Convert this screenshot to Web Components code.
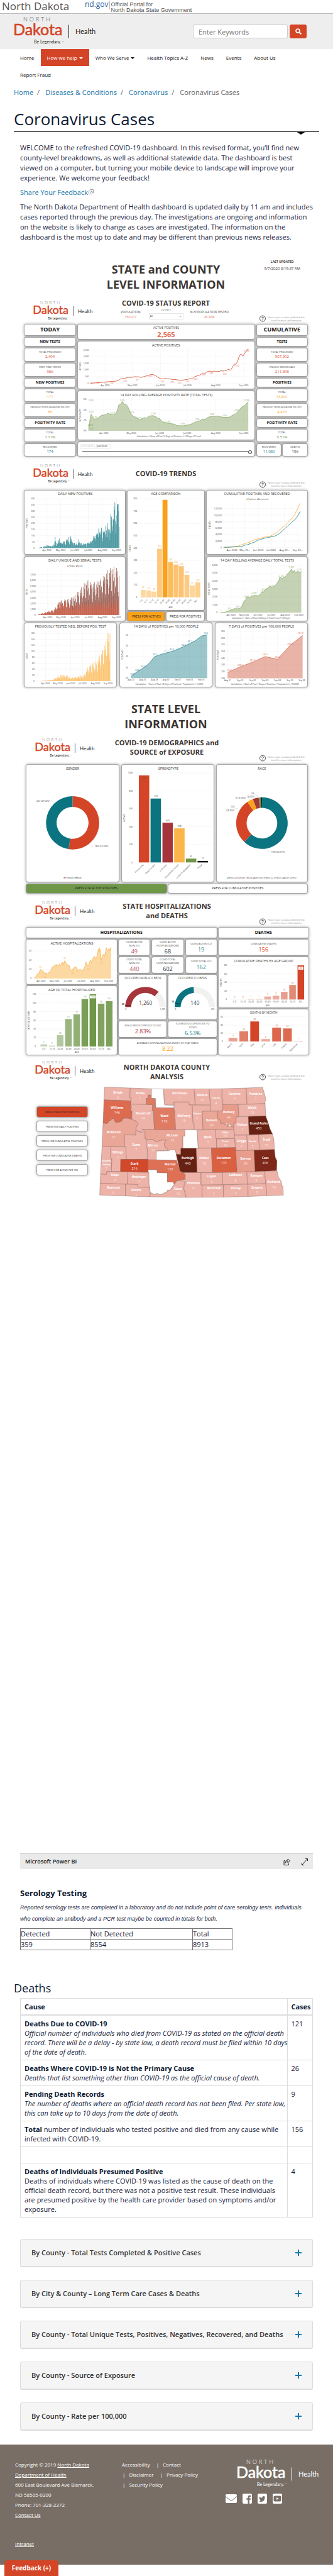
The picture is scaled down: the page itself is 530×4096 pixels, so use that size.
<!DOCTYPE html>
<html lang="en">
<head>
<meta charset="utf-8">
<title>Coronavirus Cases | Department of Health</title>
<meta name="viewport" content="width=device-width, initial-scale=1">
<style>
  body { margin: 0; background: #fff; color: #15203a; font: 11px/16px "Open Sans", "Noto Sans", sans-serif; }
</style>
</head>
<body>
<covid-page></covid-page>

<script>
const define = (name, css, html) => {
  const tpl = document.createElement('template');
  customElements.define(name, class extends HTMLElement {
    constructor() {
      super();
      this.attachShadow({ mode: 'open' });
    }
    connectedCallback() {
      if (this.shadowRoot.childNodes.length) return;
      tpl.innerHTML = `<style>*{box-sizing:border-box}:host{display:block;box-sizing:border-box}${css}</style>` +
        (typeof html === 'function' ? html(this) : html);
      this.shadowRoot.append(tpl.content.cloneNode(true));
    }
  });
};

/* ---------- brand ---------- */
define('nd-logo', `
  :host{color:#222;--brand:#d44527;--thin:#555}
  :host([tone=light]){color:#fff;--brand:#fff;--thin:#fff}
  svg{display:block;width:100%;height:auto;font-family:Lato,"Open Sans",sans-serif;overflow:visible}`,
  `<svg viewBox="0 0 131 44" role="img" aria-label="North Dakota Health, Be Legendary">
    <text x="15" y="7" font-size="9" font-weight="300" letter-spacing="3" fill="var(--thin)">NORTH</text>
    <text x="-1" y="29" font-size="25" fill="var(--brand)" stroke="var(--brand)" stroke-width=".6">Dakota</text>
    <path d="M87.500 12.500V33.500" stroke="currentColor"/>
    <text x="98" y="27" font-size="11" fill="currentColor">Health</text>
    <text x="32" y="42" font-size="7" fill="currentColor">Be Legendary.</text>
    <text x="77" y="40" font-size="3" fill="currentColor">™</text>
  </svg>`);

define('state-banner', `
  :host{display:flex;align-items:flex-start;height:22px;border-bottom:1px solid #bbb;padding-left:3px;color:#555}
  b{font:17px/20px "Open Sans",sans-serif;width:132px}
  i{font:normal 12px/12px "Open Sans",sans-serif;color:#2a62a5;border-right:1px solid #bbb;height:14px;padding-right:1px;margin-top:1px}
  span{font:9px/9px "Liberation Sans",Arial,sans-serif;padding:3px 0 0 2px}`,
  `<b>North Dakota</b><i>nd.gov</i><span>Official Portal for<br>North Dakota State Government</span>`);

define('site-header', `
  :host{display:flex;justify-content:space-between;align-items:center;background:#eee;height:56px;padding:0 42px 0 22px}
  nd-logo{width:131px;margin-bottom:2px}
  form{display:flex;gap:3px;margin:0}
  input{width:151px;height:22px;border:1px solid #ccc;border-radius:3px;padding:0 8px;font:11px "Open Sans",sans-serif;background:#fff}
  input::placeholder{color:#757575}
  button{width:27px;height:22px;border:0;border-radius:3px;background:#d44527;padding:0;display:grid;place-items:center}`,
  `<nd-logo></nd-logo>
  <form><input type="search" placeholder="Enter Keywords" aria-label="Enter Keywords">
  <button type="button" aria-label="Search"><svg width="10" height="10" viewBox="0 0 10 10" fill="none" stroke="#fff" stroke-width="1.700"><circle cx="4" cy="4" r="3"/><path d="M6.200 6.200L9.300 9.300" stroke-width="2"/></svg></button></form>`);

define('main-nav', `
  nav{display:flex;flex-wrap:wrap;padding:0 60px 0 22px}
  a{font-size:8px;line-height:27px;padding:0 10px;color:#111;text-decoration:none}
  a.on{background:#d44527;color:#fff}
  a.menu::after{content:"";display:inline-block;border:3px solid transparent;border-top-color:currentColor;border-bottom:0;margin-left:3px;vertical-align:1px}`,
  `<nav><a href="#">Home</a><a href="#" class="on menu">How we help</a><a href="#" class="menu">Who We Serve</a><a href="#">Health Topics A-Z</a><a href="#">News</a><a href="#">Events</a><a href="#">About Us</a><a href="#">Report Fraud</a></nav>`);

define('bread-crumbs', `
  :host{padding:7px 22px 0}
  ol{list-style:none;display:flex;margin:0;padding:0;color:#666}
  li+li::before{content:"/";padding:0 9px 0 6px}
  a{color:#1a76aa;text-decoration:none}`,
  `<ol><li><a href="#">Home</a></li><li><a href="#">Diseases &amp; Conditions</a></li><li><a href="#">Coronavirus</a></li><li>Coronavirus Cases</li></ol>`);

define('page-title', `
  :host{margin:15px 22px 0;padding-bottom:1px;border-bottom:1px solid #000;position:relative}
  h1{font-size:26px;line-height:38px;font-weight:400;margin:0;color:#0d1a33}
  :host::after{content:"";position:absolute;right:21px;top:100%;border:8px solid transparent;border-top:5px solid #000;border-bottom:0}`,
  `<h1><slot></slot></h1>`);

define('intro-text', `
  :host{padding:17px 14px 0 32px}
  p{margin:0 0 7px}
  a{color:#1a76aa;text-decoration:none}`,
  `<p>WELCOME to the refreshed COVID-19 dashboard. In this revised format, you’ll find new<br>county-level breakdowns, as well as additional statewide data. The dashboard is best<br>viewed on a computer, but turning your mobile device to landscape will improve your<br>experience. We welcome your feedback!</p>
  <p><a href="#">Share Your Feedback<svg width="9" height="9" viewBox="0 0 9 9" fill="none" stroke="#999"><path d="M3.500 2.500h-2v5h5v-2M3.500 1V.500h5v5h-1.500M3 6l3-3M4 3h2.500v2.500"/></svg></a></p>
  <p>The North Dakota Department of Health dashboard is updated daily by 11 am and includes<br>cases reported through the previous day. The investigations are ongoing and information<br>on the website is likely to change as cases are investigated. The information on the<br>dashboard is the most up to date and may be different than previous news releases.</p>`);

/* ---------- report building blocks ---------- */
const CARD = `background:#fff;border-radius:3px;box-shadow:0 0 0 1px #a6a6a6,0 0 4px 1px rgba(0,0,0,.35);`;

define('help-note', `
  :host{display:flex;align-items:center;gap:3px;color:#888;font-size:4px;line-height:5px;text-align:center}
  svg{flex:none;display:block;width:10px;height:13px}`,
  `<svg viewBox="0 0 10 13"><circle cx="5" cy="6.500" r="4.500" fill="#fff" stroke="#222" stroke-width=".8"/><path d="M3.600 5.500q0-1.400 1.400-1.400t1.400 1.300q0 .8-.8 1.200t-.6 1.100M5 8.400v.9" fill="none" stroke="#222" stroke-width=".8"/></svg>
  <span>Hover over a value and click the<br>icon for more information</span>`);

define('report-head', `
  :host{display:grid;grid-template-columns:1fr auto 1fr;min-height:44px;padding-left:14px}
  nd-logo{width:95px;margin-top:4px}
  h3{font-size:11px;line-height:15px;margin:var(--drop,5px) 0 0;color:#3b3532;text-align:center}
  help-note{justify-self:end;align-self:end;margin-right:4px}
  .mid{margin-left:-14px}`,
  `<nd-logo></nd-logo><div class="mid"><h3><slot></slot></h3><slot name="under"></slot></div><help-note></help-note>`);

define('big-title', `
  :host{display:grid;grid-template-columns:1fr auto 1fr;color:#3b3532}
  h2{grid-column:2;margin:0;font-size:18px;line-height:24px;text-align:center}
  ::slotted(*){justify-self:end;align-self:start}`,
  `<h2><slot></slot></h2><slot name="side"></slot>`);

define('stat-card', `
  :host{${CARD}display:flex;flex-direction:column;align-items:center;justify-content:center;text-align:center;color:#444;font-size:4px;line-height:6px;min-width:0}
  b{font-weight:400;font-size:6px;line-height:8px;color:var(--tone,#333)}
  :host([size=m]) b{font-size:9px;line-height:11px}
  :host([size=l]){font-size:5px;line-height:8px}
  :host([size=l]) b{font-size:11px;line-height:13px;font-weight:700}
  :host([tight]) span{font-size:3px}`,
  h => `<span>${h.getAttribute('label')}</span><b style="--tone:${h.getAttribute('tone')}">${h.getAttribute('value')}</b>`);

define('head-card', `
  :host{${CARD}display:grid;place-items:center;font-size:6px;line-height:8px;font-weight:700;color:#111}
  :host([size=m]){font-size:7px;min-height:16px}
  :host([size=l]){font-size:9px;line-height:12px}`, `<slot></slot>`);

define('press-button', `
  button{${CARD}display:block;width:100%;height:100%;min-height:14px;border:0;padding:0;font:5px/7px "Open Sans",sans-serif;color:#222}
  :host([tone=orange]) button{background:#f9a11b}
  :host([tone=green]) button{background:#6f9748}
  :host([tone=red]) button{background:#d44527}
  :host([small]) button{font-size:4px;min-height:16px}`,
  `<button type="button"><slot></slot></button>`);

/* ---------- chart drawing ---------- */
/* A sheet maps data-sheet coordinates (origin ox,oy; sx,sy sheet units to one drawing unit). */
const sheet = (ox, oy, w, h, sy, parts) => {
  const sx = 2, X = x => +((x - ox) / sx).toFixed(1), Y = y => +((y - oy) / sy).toFixed(1);
  const pts = s => s.split(' ').map(p => { const [x, y] = p.split(','); return X(x) + ',' + Y(y); }).join(' ');
  const d = {
    X, Y,
    t: (x, y, s, o = {}) => `<text x="${X(x)}" y="${Y(y)}" dy=".35em" font-size="${o.z || 5}" text-anchor="${o.a || 'middle'}" fill="${o.f || '#444'}"${o.w ? ` font-weight="${o.w}"` : ''}${o.r ? ` transform="rotate(${o.r} ${X(x)} ${Y(y)})"` : ''}>${s}</text>`,
    title: (x, y, s) => d.t(x, y, s, { z: 8, f: '#333' }),
    hs: (ys, a, b) => ys.map(y => `<path d="M${X(a)} ${Y(y)}H${X(b)}" class="g"/>`).join(''),
    vs: (xs, a, b) => xs.map(x => `<path d="M${X(x)} ${Y(a)}V${Y(b)}" class="g"/>`).join(''),
    yl: (x, rows, z) => rows.map(([y, s]) => d.t(x, y, s, { a: 'end', z })).join(''),
    xl: (y, cols, o) => cols.map(([x, s]) => d.t(x, y, s, o)).join(''),
    line: (s, c) => `<polyline points="${pts(s)}" fill="none" stroke="${c}" stroke-width="1.200"/>`,
    area: (s, base, fill, c) => { const a = s.split(' '); return `<polygon points="${pts(a[0].split(',')[0] + ',' + base + ' ' + s + ' ' + a[a.length - 1].split(',')[0] + ',' + base)}" fill="${fill}"/>` + (c ? d.line(s, c) : ''); },
    bar: (x, top, w, base, f) => `<rect x="${X(x - w / 2)}" y="${Y(top)}" width="${w / sx}" height="${Math.max(0, Y(base) - Y(top)).toFixed(1)}" fill="${f}"/>`,
    poly: (s, f) => `<polygon points="${pts(s)}" fill="${f}" stroke="#7b5a53" stroke-width=".6"/>`,
    lab: (rows, f) => rows.map(([x, y, s]) => d.t(x, y, s, { f })).join('')
  };
  return `<svg viewBox="0 0 ${w / sx} ${(h / sy).toFixed(1)}" role="img">${parts(d)}</svg>`;
};
const months = ['Apr 2020', 'May 2020', 'Jun 2020', 'Jul 2020', 'Aug 2020', 'Sep 2020'];
const zip = (a, b) => a.map((x, i) => [x, b[i]]);
const steps = (y0, dy, labels) => labels.map((s, i) => [y0 - dy * i, s]);
const ring = (cx, cy, R, r, parts) => {
  let a = 0;
  const p = (q, t) => `${(cx + q * Math.sin(t)).toFixed(1)} ${(cy - q * Math.cos(t)).toFixed(1)}`;
  return parts.map(([v, c]) => {
    const b = a + v * 2 * Math.PI / 100, big = v > 50 ? 1 : 0;
    const s = `<path d="M${p(R, a)}A${R} ${R} 0 ${big} 1 ${p(R, b)}L${p(r, b)}A${r} ${r} 0 ${big} 0 ${p(r, a)}Z" fill="${c}"/>`;
    a = b; return s;
  }).join('');
};
const gauge = (cx, cy, share, mark, color) => {
  const arc = (f, c) => { const t = Math.PI * (1 - f), p = q => `${(cx + q * Math.cos(t)).toFixed(1)} ${(cy - q * Math.sin(t)).toFixed(1)}`; return `<path d="M${cx - 47} ${cy}A47 47 0 0 1 ${p(47)}L${p(33)}A33 33 0 0 0 ${cx - 33} ${cy}Z" fill="${c}"/>`; };
  const t = Math.PI * (1 - mark);
  return arc(1, '#f2f1f0') + arc(share, color) + `<path d="M${(cx + 33 * Math.cos(t)).toFixed(1)} ${(cy - 33 * Math.sin(t)).toFixed(1)}L${(cx + 47 * Math.cos(t)).toFixed(1)} ${(cy - 47 * Math.sin(t)).toFixed(1)}" stroke="#111" stroke-width=".8"/>`;
};
const daily = [1,0,0,0,0,3,0,4,8,6,8,0,2,3,7,13,9,16,12,8,10,20,22,14,12,20,12,18,12,16,8,14,12,18,12,12,28,22,46,90,55,43,20,16,32,42,44,62,75,46,44,40,35,44,38,34,40,54,48,52,38,30,26,60,72,52,67,50,88,46,30,58,78,95,70,54,50,40,42,26,38,42,36,18,26,30,46,26,20,40,72,50,40,20,38,36,40,28,26,20,38,30,32,26,32,36,30,8,42,40,34,38,46,36,40,44,58,52,36,56,60,70,98,92,80,98,55,76,105,120,116,112,88,158,110,126,118,104,140,165,132,84,54,128,146,120,132,110,180,90,142,168,200,88,152,128,60,148,120,272,230,254,176,140,234,232,336,310,372,220,116,194,266,358,345,358,300,170];
const week = [.62, .9, 1, .8, .94, .5, .4, .85, .95, .7, 1, .78, .45, .58];
/* day-by-day values between monthly marks, with the weekly reporting rhythm laid over them */
const paced = (marks, n, k = 0) => Array.from({ length: n }, (_, i) => {
  const p = i / (n - 1) * (marks.length - 1), j = Math.min(marks.length - 2, Math.floor(p));
  return (marks[j] + (marks[j + 1] - marks[j]) * (p - j)) * week[(i + k) % week.length];
});

const charts = {
  active: () => sheet(369, 615, 828, 334, 3, d => d.title(783, 640, 'ACTIVE POSITIVES') +
    d.hs([675, 722, 769, 816, 862, 909], 427, 1175) + d.vs([497, 625, 757, 884, 1016, 1148], 675, 909) +
    d.yl(420, steps(909, 46.8, ['0', '500', '1,000', '1,500', '2,000', '2,500'])) +
    d.xl(925, zip([497, 625, 757, 884, 1016, 1148], months)) + d.t(380, 789, 'ACTIVES', { r: -90 }) +
    d.line('427,909 445,907 475,904 497,900 530,896 545,895 558,890 565,882 573,876 590,875 602,867 622,868 632,863 655,864 665,868 680,862 690,857 700,857 710,847 722,847 735,857 745,868 757,876 770,879 778,874 790,878 805,879 815,884 825,882 848,889 870,885 884,881 897,876 906,878 918,862 940,852 950,843 958,837 966,840 978,826 990,823 1000,828 1008,823 1016,827 1035,825 1042,818 1050,824 1058,818 1064,823 1070,815 1078,810 1084,818 1090,810 1096,790 1104,773 1110,776 1118,758 1126,722 1134,703 1144,718 1150,702 1157,687 1165,670 1170,670', '#d44527') +
    d.lab([[433, 905, '6'], [463, 905, '88'], [499, 906, '101'], [528, 905, '132'], [591, 891, '376'], [650, 882, '491'], [710, 864, '672'], [766, 897, '323'], [812, 903, '275'], [846, 905, '213'], [884, 899, '303'], [922, 879, '523'], [961, 855, '771'], [995, 840, '923'], [1059, 843, '913'], [1114, 786, '1,516'], [1161, 687, '2,565']], '#df7158')),

  rolling: () => sheet(369, 966, 828, 338, 3, d => d.title(784, 991, '14 DAY ROLLING AVERAGE POSITIVITY RATE (TOTAL TESTS)') +
    d.area('418,1200 422,1217 426,1160 431,1128 438,1150 446,1162 458,1161 467,1150 480,1136 490,1133 500,1132 509,1120 518,1127 535,1132 545,1126 552,1108 557,1085 561,1062 570,1060 577,1038 583,1048 588,1060 594,1058 602,1072 608,1090 614,1112 620,1130 630,1142 645,1152 660,1168 672,1158 682,1152 692,1155 702,1141 722,1138 735,1146 745,1157 753,1158 765,1182 778,1185 795,1193 820,1197 835,1208 862,1210 880,1205 900,1198 925,1180 940,1175 955,1162 965,1165 980,1150 995,1143 1015,1143 1025,1140 1040,1147 1055,1150 1080,1149 1095,1135 1110,1125 1118,1112 1125,1105 1135,1082 1142,1073 1149,1071 1160,1055 1169,1040', 1245, '#c5d3b4', '#8aac69') +
    d.hs([1023, 1098, 1170, 1245], 415, 1175) + d.vs([491, 620, 753, 882, 1016, 1148], 1023, 1245) +
    d.yl(409, [[1023, '6%'], [1098, '4%'], [1170, '2%'], [1245, '0%']]) + d.xl(1260, zip([491, 620, 753, 882, 1016, 1148], months)) +
    d.t(380, 1135, '% POSITIVITY', { r: -90 }) + d.t(796, 1284, 'Calculation = (Sum of Past 14 Days of Positives / 14 Days of Tests)') +
    d.lab([[430, 1032, '5.9%'], [577, 1032, '5.6%'], [431, 1113, '3.2%'], [449, 1150, '2.2%'], [430, 1203, '0.8%'], [430, 1230, '0.0%'], [531, 1119, '3.1%'], [621, 1116, '3.1%'], [658, 1156, '2.1%'], [723, 1125, '2.9%'], [792, 1180, '1.4%'], [861, 1197, '0.9%'], [929, 1164, '1.8%'], [999, 1128, '2.8%'], [1058, 1137, '2.5%'], [1115, 1101, '3.5%'], [1163, 1032, '5.5%']], '#83a761')),

  newpos: () => sheet(117, 210, 474, 416, 2.8, d => d.title(355, 233, 'DAILY NEW POSITIVES') +
    d.hs([264, 303, 345, 384, 426, 467, 507, 548, 588], 172, 562) + d.vs([222, 287, 354, 417, 484, 550], 264, 588) +
    d.yl(165, steps(588, 40.5, ['0', '50', '100', '150', '200', '250', '300', '350', '400'])) +
    d.xl(602, zip([222, 287, 354, 417, 484, 550], months)) + d.t(128, 426, 'POSITIVES', { r: -90 }) +
    daily.map((v, i) => d.bar(176 + i * 386 / (daily.length - 1), 588 - v * .81, 2.2, 588, i % 2 ? '#1f7f8a' : '#3a8e98')).join('')),

  ages: () => sheet(603, 210, 357, 782, 2.8, d => d.title(782, 233, 'AGE COMPARISON') +
    d.hs([264, 345, 426, 507, 588, 668, 749, 830, 910], 655, 950) + d.yl(648, steps(910, 80.8, ['0', '100', '200', '300', '400', '500', '600', '700', '800'])) +
    [[676, 861, 63, '#fcd8a0'], [702, 865, 58, '#fcd8a0'], [727, 872, 49, '#fcd8a0'], [753, 592, 394, '#fcc97e'], [778.500, 272, 789, '#f9a11b'], [804, 678, 288, '#fcbc5c'], [830, 695, 266, '#fcc372'], [855, 706, 254, '#fcc372'], [881, 762, 184, '#fccb85'], [906.500, 833, 97, '#fcd69a'], [932, 812, 123, '#fcd08e']].map(([x, y, v, c]) => d.bar(x, y, 23, 910, c) + d.t(x, y - (v === 789 ? 0 : 15), v, { f: '#f8b04a' })).join('') +
    d.xl(925, zip([672, 697, 723, 748, 774, 799, 825, 850, 876, 901, 929], ['0-5', '6-11', '12-14', '15-19', '20-29', '30-39', '40-49', '50-59', '60-69', '70-79', '80+']), { a: 'end', r: -45 }) +
    d.t(805, 974, 'AGE') + d.t(615, 588, 'CASES', { r: -90 })),

  cumulative: () => sheet(972, 210, 473, 418, 2.8, d => d.title(1208, 233, 'CUMULATIVE POSITIVES AND RECOVERED') +
    d.t(1209, 269, '<tspan fill="#f9a11b">●</tspan>Positives <tspan fill="#0b7480">●</tspan>Recovered') +
    d.hs([329, 371, 414, 456, 498, 541, 584], 1050, 1416) + d.vs([1091, 1151, 1214, 1275, 1337, 1400], 292, 584) +
    d.yl(1043, steps(584, 42.4, ['0', '2,000', '4,000', '6,000', '8,000', '10,000', '12,000']), 6) +
    d.xl(601, zip([1091, 1151, 1214, 1275, 1337, 1399], ['Apr 2020', 'May 20...', 'Jun 2020', 'Jul 2020', 'Aug 20...', 'Sep 20...']), { z: 6 }) + d.t(986, 437, 'CASES', { r: -90, z: 6 }) +
    d.line('1050,583 1080,582 1105,578 1120,575 1130,569 1151,558 1175,549 1185,541 1200,531 1220,525 1240,517 1270,509 1285,500 1300,487 1312,471 1325,455 1340,439 1352,422 1364,402 1372,394 1380,376 1387,364 1393,342 1401,327 1406,304 1411,292', '#fbaa38') +
    d.line('1055,583 1120,579 1140,575 1150,569 1165,565 1180,556 1195,550 1210,537 1225,531 1240,524 1265,517 1290,510 1305,500 1320,484 1335,465 1350,445 1365,427 1380,408 1392,392 1402,369 1411,348', '#1d7f8a')),

  tests: () => sheet(117, 647, 474, 418, 2.8, d => {
    const total = paced([60, 350, 700, 900, 2500, 2700, 2900, 3600, 4700, 6100, 5600, 5900, 6500, 8000, 8400, 8000], 176);
    const uniq = paced([50, 330, 650, 850, 2300, 2200, 1700, 1900, 2000, 2200, 2000, 2300, 2100, 2300, 2500, 2400], 176);
    return d.title(354, 670, 'DAILY UNIQUE AND SERIAL TESTS') + d.t(353, 706, '<tspan fill="#dc6b50">●</tspan>Unique <tspan fill="#7d2818">●</tspan>Serial') +
      d.hs([762, 800, 838, 876, 914, 952, 989, 1027], 175, 562) + d.vs([226, 289, 355, 419, 484, 550], 728, 1027) +
      d.yl(169, steps(1027, 37.9, ['0', '1,000', '2,000', '3,000', '4,000', '5,000', '6,000', '7,000'])) +
      d.xl(1042, zip([226, 289, 355, 419, 484, 550], months)) + d.t(128, 877, 'TESTS', { r: -90 }) +
      total.map((v, i) => { const x = 180 + i * 2.18; return d.bar(x, 1027 - v * .0379, 2, 1027, i % 2 ? '#7d3426' : '#97574a') + d.bar(x, 1027 - uniq[i] * .0379, 2, 1027, i % 2 ? '#dd6046' : '#e07a64'); }).join('');
  }),

  totals: () => sheet(972, 647, 473, 418, 2.8, d => d.title(1209, 670, '14 DAY ROLLING AVERAGE DAILY TOTAL TESTS') +
    d.area('1037,1009 1058,1008 1075,1000 1090,990 1105,984 1118,986 1130,980 1138,965 1145,940 1155,925 1160,908 1175,910 1185,900 1200,898 1214,900 1225,888 1232,873 1242,875 1250,855 1260,848 1270,838 1280,846 1290,838 1298,825 1306,810 1312,795 1316,775 1325,788 1335,778 1342,775 1350,758 1358,748 1364,735 1370,725 1376,748 1383,732 1390,752 1398,738 1406,745 1416,742', 1010, '#c5d3b4', '#8aac69') +
    d.hs([700, 752, 804, 855, 907, 958, 1010], 1030, 1422) + d.vs([1086, 1148, 1212, 1275, 1340, 1405], 700, 1010) +
    d.yl(1023, steps(1010, 51.7, ['0', '1,000', '2,000', '3,000', '4,000', '5,000', '6,000'])) + d.xl(1025, zip([1086, 1148, 1212, 1275, 1340, 1405], months)) +
    d.t(983, 855, 'TOTAL TESTS', { r: -90 }) + d.t(1226, 1047, 'Calculation = (Sum of Past 14 Days of Total Tests / 14 Days)') +
    d.lab([[1038, 996, '1'], [1078, 983, '251'], [1117, 971, '495'], [1157, 905, '1,804'], [1194, 882, '2,228'], [1236, 860, '2,656'], [1276, 835, '3,154'], [1323, 775, '4,292'], [1370, 712, '5,507'], [1407, 730, '5,142']], '#83a761')),

  previously: () => sheet(117, 1081, 431, 418, 2.8, d => d.title(333, 1104, 'PREVIOUSLY TESTED NEG. BEFORE POS. TEST') +
    d.hs([1148, 1187, 1226, 1266, 1305, 1344, 1383, 1422, 1461], 170, 520) + d.vs([216, 274, 334, 390, 450, 510], 1135, 1461) +
    d.yl(164, steps(1461, 39.1, ['0', '20', '40', '60', '80', '100', '120', '140', '160'])) + d.xl(1475, zip([216, 274, 334, 390, 450, 510], months)) + d.t(128, 1296, 'CASES', { r: -90 }) +
    paced([0, 0, 2, 3, 6, 16, 22, 20, 12, 14, 18, 22, 50, 62, 70, 98, 135, 185], 176).map((v, i) => d.bar(172 + i * 1.98, 1461 - v * 1.95, 1.8, 1461, i % 2 ? '#f9ad3a' : '#fcc066')).join('')),

  per10k: () => sheet(565, 1081, 433, 418, 2.8, d => d.title(783, 1104, '14 DAYS of POSITIVES per 10,000 PEOPLE') +
    d.area('617,1432 645,1402 673,1378 701,1348 728,1302 757,1287 783,1277 810,1267 838,1252 866,1235 893,1215 921,1196 950,1165 977,1157', 1443, '#9bc6cb', '#2f8690') +
    d.hs([1159, 1230, 1302, 1373, 1443], 612, 985) + d.vs([617, 672, 728, 782, 838, 893, 948], 1135, 1443) +
    d.yl(603, [[1159, '50'], [1230, '45'], [1302, '40'], [1373, '35'], [1443, '30']]) + d.xl(1456, zip([617, 672, 728, 782, 838, 893, 948], ['Aug 24', 'Aug 26', 'Aug 28', 'Aug 30', 'Sep 01', 'Sep 03', 'Sep 05'])) +
    d.t(576, 1287, 'POSITIVES', { r: -90 }) + d.t(797, 1481, 'Calculation = (Sum of Past 14 Days of Positives / Population) x 10,000') +
    d.lab([[623, 1417, '30.9'], [646, 1391, '32.8'], [673, 1366, '34.5'], [728, 1288, '39.9'], [784, 1263, '41.7'], [810, 1252, '42.5'], [866, 1224, '44.6'], [893, 1201, '46.1'], [971, 1145, '50.2']], '#2f8690')),

  per100k: () => sheet(1016, 1081, 431, 418, 2.8, d => d.title(1232, 1104, '7 DAYS of POSITIVES per 100,000 PEOPLE') +
    d.area('1073,1405 1132,1367 1190,1337 1249,1300 1307,1318 1366,1227 1425,1161', 1443, '#eab3a7', '#dc6b50') +
    d.hs([1134, 1178, 1222, 1266, 1310, 1355, 1398, 1443], 1068, 1428) + d.vs([1073, 1132, 1190, 1249, 1307, 1366, 1425], 1134, 1443) +
    d.yl(1060, steps(1443, 44.1, ['230', '235', '240', '245', '250', '255', '260', '265'])) + d.xl(1456, zip([1073, 1132, 1190, 1249, 1307, 1366, 1422], ['Aug 31', 'Sep 01', 'Sep 02', 'Sep 03', 'Sep 04', 'Sep 05', 'Sep 06'])) +
    d.t(1027, 1288, 'POSITIVES', { r: -90 }) + d.t(1248, 1481, 'Calculation = (Sum of Past 7 Days of Positives / Population) x 100,000') +
    d.lab([[1083, 1391, '234.2'], [1132, 1355, '238.5'], [1190, 1324, '241.9'], [1249, 1288, '246.2'], [1308, 1304, '244.2'], [1366, 1216, '254.4'], [1416, 1148, '261.9']], '#dc6b50')),

  gender: () => sheet(126, 515, 433, 820, 3, d => d.title(343, 540, 'GENDER') +
    ring(d.X(343), d.Y(924), 62.500, 37.500, [[52.36, '#d44527'], [47.64, '#0b7480']]) +
    `<path d="M${d.X(239)} ${d.Y(769)}h3.500l4.500 5M${d.X(439)} ${d.Y(1091)}h-4l-4-6" class="k"/>` +
    d.t(202, 771, '1222 (47.64%)') + d.t(478, 1092, '1343 (52.36%)') +
    d.t(343, 1309, '<tspan fill="#d44527">●</tspan>Female <tspan fill="#0b7480">●</tspan>Male', { z: 6 })),

  spread: () => sheet(575, 515, 433, 820, 3, d => d.title(793, 540, 'SPREADTYPE') +
    d.hs([573, 699, 825, 951, 1077], 635, 1000) + d.yl(626, steps(1203, 126, ['0', '200', '400', '600', '800', '1000'])) +
    [[679, 590, 973, '#d44527'], [734, 753, 714, '#0b7480'], [790, 923, 443, '#a6343b'], [845, 963, 378, '#fcb54a'], [900, 1176, 42, '#6f9748'], [955, 1192, 15, '#000']].map(([x, y, v, c]) => d.bar(x, y, 49, 1203, c) + d.t(x, y + (v === 973 ? 18 : -16), v)).join('') +
    d.xl(1217, zip([675, 730, 785, 841, 896, 951], ['Community', 'Close Contact', 'Unknown', 'Household Contact', 'Under Investigation', 'Travel']), { a: 'end', r: -45 }) + d.t(587, 888, 'ACTIVES', { r: -90 })),

  race: () => sheet(1023, 515, 424, 820, 3, d => d.title(1235, 540, 'RACE') +
    ring(d.X(1235), d.Y(926), 60.500, 36, [[62.07, '#0b7480'], [28.46, '#d44527'], [3.78, '#f9a11b'], [3.66, '#a6343b'], [1.33, '#6f9748'], [.7, '#000']]) +
    `<path d="M${d.X(1201)} ${d.Y(726)}h4l2 5M${d.X(1167)} ${d.Y(745)}h2l4 6M${d.X(1110)} ${d.Y(823)}h5l4 4M${d.X(1272)} ${d.Y(1127)}h-4l-1-6" class="k"/>` +
    d.t(1192, 717, '94') + d.t(1183, 738, '(3.66%)') + d.t(1135, 747, '97 (3.78%)') + d.t(1098, 813, '730') + d.t(1086, 837, '(28.46%)') + d.t(1310, 1128, '1592 (62.07%)') +
    d.t(1234, 1311, [['#0b7480', 'White'], ['#d44527', 'Unknown'], ['#f9a11b', 'Black'], ['#a6343b', 'American Indian'], ['#6f9748', '2 or More'], ['#000', 'Asian'], ['#777', 'Other']].map(([c, s]) => `<tspan fill="${c}">●</tspan>${s}`).join(' '))),

  hosp: () => sheet(126, 333, 427, 316, 3, d => d.title(341, 358, 'ACTIVE HOSPITALIZATIONS') +
    d.hs([413, 478, 543], 160, 545) + d.yl(150, steps(608, 65, ['0', '20', '40', '60'])) +
    d.area('163,598 170,596 178,575 185,572 192,543 198,553 205,555 210,572 220,568 225,575 235,560 242,548 248,528 258,515 268,508 275,521 282,505 288,516 295,492 300,510 306,483 313,497 320,512 327,513 332,545 340,552 348,535 356,523 364,535 368,553 375,546 382,545 390,555 397,535 402,525 406,490 412,508 417,520 422,502 427,479 434,488 441,462 447,450 453,467 460,448 464,408 469,393 474,410 478,478 484,448 489,437 494,450 499,420 502,390 508,408 514,400 520,413 525,388', 608, '#fcd8a2', '#fbb24a') +
    d.xl(624, zip([195, 258, 322, 385, 449, 514], months)) +
    d.lab([[192, 528, '20'], [212, 597, '10'], [306, 465, '39'], [343, 570, '18'], [418, 540, '27'], [479, 498, '40'], [469, 414, '66'], [520, 398, '68']], '#fbb24a')),

  hospage: () => sheet(126, 663, 427, 485, 3, d => d.title(340, 688, 'AGE OF TOTAL HOSPITALIZED') +
    d.hs([720, 781, 843, 904, 966, 1027], 180, 545) + d.yl(171, steps(1089, 61.5, ['0', '20', '40', '60', '80', '100', '120'])) +
    [[208, 1074, 5, '#c3d2b2'], [247, 1083, 2, '#c3d2b2'], [285, 1009, 26, '#b5c7a0'], [324, 895, 63, '#9ab580'], [363, 862, 74, '#92af75'], [401, 754, 109, '#7a9e56'], [439, 720, 120, '#6f9748'], [478, 787, 98, '#81a35f'], [516, 769, 104, '#7da05a']].map(([x, y, v, c]) => d.bar(x, y, 31, 1089, c) + (v === 120 ? d.bar(x, y + 9, 27, y + 29, '#fff') + d.t(x, y + 21, v, { f: '#83a761' }) : d.t(x, y - 16, v, { f: '#83a761' }))).join('') +
    d.xl(1104, zip([208, 247, 285, 324, 363, 401, 439, 478, 516], ['0-9', '10-19', '20-29', '30-39', '40-49', '50-59', '60-69', '70-79', '80+'])) + d.t(364, 1127, 'AGE') + d.t(138, 904, 'HOSPITALIZATIONS', { r: -90 })),

  bedsA: () => sheet(563, 585, 223, 310, 3, d => d.t(676, 608, 'OCCUPIED NON-ICU BEDS', { z: 7 }) + gauge(d.X(687), d.Y(810), .727, .028, '#a6343b') + d.t(688, 785, '1,260', { z: 12 }) + d.t(583, 791, '49', { w: 700 }) + d.t(596, 825, '0') + d.t(767, 825, '1,733')),
  bedsB: () => sheet(797, 585, 223, 310, 3, d => d.t(909, 608, 'OCCUPIED ICU BEDS', { z: 7 }) + gauge(d.X(920), d.Y(810), .481, .065, '#0b7480') + d.t(921, 785, '140', { z: 12 }) + d.t(817, 773, '19', { w: 700 }) + d.t(830, 825, '0') + d.t(1004, 825, '291')),

  deathage: () => sheet(1030, 456, 423, 358, 3, d => d.title(1241, 481, 'CUMULATIVE DEATHS BY AGE GROUP') +
    d.hs([514, 574, 634, 694, 754], 1078, 1445) + d.yl(1068, steps(754, 60, ['0', '20', '40', '60', '80'])) +
    [[1105, 754, 0, '#edb1a6'], [1144, 754, 0, '#edb1a6'], [1182, 751, 1, '#edb1a6'], [1221, 751, 1, '#edb1a6'], [1260, 733, 7, '#ebaca0'], [1299, 727, 9, '#ebaca0'], [1338, 700, 18, '#e79e8e'], [1377, 652, 34, '#e18a76'], [1416, 513, 86, '#d44527']].map(([x, y, v, c]) => d.bar(x, y, 31, 754, c) + (v === 86 ? d.bar(x, y + 9, 24, y + 31, '#fff') + d.t(x, y + 21, v, { f: '#dc5a3e' }) : d.t(x, y - 16, v, { f: '#dc5a3e' }))).join('') +
    d.xl(771, zip([1105, 1144, 1182, 1221, 1260, 1299, 1338, 1377, 1416], ['0-9', '10-19', '20-29', '30-39', '40-49', '50-59', '60-69', '70-79', '80+'])) + d.t(1260, 795, 'AGE') + d.t(1041, 634, 'DEATHS', { r: -90 })),

  deathmonth: () => sheet(1030, 830, 423, 318, 3, d => d.t(1242, 854, 'DEATHS BY MONTH', { z: 7 }) +
    d.hs([882, 941, 999, 1056], 1060, 1445) + d.yl(1050, steps(1056, 58, ['0', '20', '40', '60'])) +
    [[1097, 1030, 9, '#e9a193'], [1148, 984, 25, '#e07e68'], [1199, 915, 49, '#d44527'], [1251, 1039, 6, '#eaa99c'], [1302, 958, 34, '#dc674e'], [1353, 964, 32, '#dc6b50'], [1405, 1053, 1, '#edb1a6']].map(([x, y, v, c]) => d.bar(x, y, 41, 1056, c) + d.t(x, y - 15, v, { f: '#dc5a3e' })).join('') +
    d.xl(1070, zip([1092, 1143, 1194, 1246, 1297, 1348, 1400], ['March', 'April', 'May', 'June', 'July', 'August', 'September']), { a: 'end', r: -45 }))
};
define('chart-card', `
  :host{${CARD}min-width:0}
  svg{display:block;width:100%;height:auto}
  .g{stroke:#999;stroke-opacity:.45;stroke-width:.5;stroke-dasharray:1 1;fill:none}
  .k{stroke:#bbb;stroke-width:.6;fill:none}`,
  h => charts[h.getAttribute('kind')]());

const counties = [
  ['Divide', 2, 556, 272, '493,234 614,241 612,311 618,313 617,332 490,325'],
  ['Burke', 1, 661, 278, '614,241 714,246 713,291 699,291 699,314 690,314 689,357 617,354 618,313 612,311'],
  ['', 'w', 0, 0, '714,246 771,247 772,310 776,360 818,362 819,382 733,380 732,314 713,314'],
  ['Bottineau', 7, 847, 278, '771,247 915,247 919,361 891,360 890,340 820,340 819,362 776,360'],
  ['Rolette', 20, 953, 290, '915,247 986,247 991,362 921,361'],
  ['Pierce', 6, 929, 420, '905,361 991,362 992,404 953,405 957,535 914,535 914,493 909,490'],
  ['Towner', 4, 1018, 310, '987,247 1046,246 1046,318 1050,320 1050,402 992,404 991,318 987,318'],
  ['Cavalier', 4, 1105, 281, '1046,246 1160,241 1164,354 1050,358 1050,320 1046,318'],
  ['Pembina', 7, 1205, 281, '1160,241 1237,236 1242,262 1253,320 1249,335 1249,352 1164,354'],
  ['Williams', 146, 552, 380, '490,325 617,332 616,354 618,400 622,402 621,462 600,454 580,456 573,477 547,486 540,476 538,455 525,462 522,470 512,474 510,486 500,494 486,486'],
  ['Mountrail', 14, 674, 419, '617,354 719,358 717,400 724,403 724,488 727,490 727,532 670,533 670,554 651,549 641,536 641,520 651,493 640,473 621,462 622,400'],
  ['Ward', 119, 775, 440, '699,291 713,291 713,314 732,316 733,380 819,382 823,405 824,420 828,534 727,534 724,403 718,400 719,358 689,357 690,314 699,314'],
  ['McHenry', 15, 867, 437, '820,340 890,340 891,360 905,361 909,490 914,493 914,535 828,534 823,405'],
  ['Benson', 29, 997, 467, '953,405 1025,404 1027,455 1040,470 1040,492 1055,492 1070,500 1078,510 1088,515 1102,514 1101,533 957,535'],
  ['Ramsey', 44, 1078, 413, '1050,358 1122,357 1126,442 1113,445 1112,488 1102,490 1102,516 1090,514 1084,495 1072,514 1073,482 1060,500 1048,487 1040,492 1038,468 1025,455 1025,404 1050,402'],
  ['Walsh', 18, 1188, 380, '1122,357 1249,352 1252,438 1126,442'],
  ['Nelson', 1, 1142, 500, '1113,445 1170,442 1174,572 1105,574 1102,490 1112,488'],
  ['Grand Forks', 450, 1219, 491, '1170,442 1252,438 1264,490 1272,530 1284,566 1174,572'],
  ['McKenzie', 27, 536, 552, '486,486 500,494 510,486 512,474 522,470 525,462 538,455 540,476 547,486 573,477 580,456 600,454 621,462 640,473 651,493 641,520 640,573 588,571 586,657 481,652'],
  ['Dunn', 7, 642, 641, '588,571 640,573 641,536 651,549 670,554 676,545 683,545 684,598 690,602 688,660 694,665 694,744 595,747 593,657 586,657'],
  ['McLean', 32, 812, 575, '670,533 872,536 871,580 862,580 862,665 852,667 852,710 830,709 825,678 792,682 785,665 775,655 774,630 782,610 765,608 735,620 720,605 690,602 684,598 683,545 676,545'],
  ['Mercer', 11, 722, 647, '690,602 720,605 735,620 765,608 782,610 774,630 775,655 785,665 792,682 737,686 736,748 696,748 694,665 688,660'],
  ['', 'w', 0, 0, '737,686 795,684 805,677 825,678 834,725 836,745 828,752 736,748'],
  ['', 'w', 0, 0, '872,536 929,537 934,665 862,665 862,580 871,580'],
  ['Wells', 3, 979, 587, '929,537 1015,536 1020,598 1020,663 934,665'],
  ['Eddy', 19, 1061, 555, '1015,536 1101,533 1105,598 1018,600'],
  ['Foster', 12, 1063, 618, '1020,600 1105,598 1110,661 1021,663'],
  ['Griggs', 2, 1138, 614, '1105,574 1163,573 1167,681 1111,683'],
  ['Steele', 7, 1190, 617, '1163,573 1219,571 1222,679 1167,681'],
  ['Traill', 10, 1256, 608, '1219,571 1284,566 1290,600 1293,675 1222,679'],
  ['Golden|Valley', 7, 501, 756, '481,652 522,655 522,740 527,742 525,829 504,829 502,851 474,849'],
  ['Billings', 3, 555, 695, '522,655 593,657 595,747 569,745 568,831 525,829 527,742 522,740'],
  ['Stark', 216, 634, 773, '569,745 698,744 698,836 568,831'],
  ['', 'w', 0, 0, '698,817 740,817 741,838 789,840 789,904 817,904 821,922 810,945 800,962 790,962 788,972 770,986 757,994 740,986 725,992 708,978 706,942 702,925'],
  ['Morton', 139, 802, 779, '698,748 832,752 848,826 873,850 870,890 835,895 821,922 817,904 789,904 789,840 741,838 740,817 698,817'],
  ['Burleigh', 443, 885, 737, '852,667 925,667 929,838 862,838 848,826 830,709 852,710'],
  ['Kidder', 10, 962, 737, '925,667 996,665 1001,838 929,838'],
  ['Stutsman', 170, 1054, 734, '996,665 1110,661 1117,835 1001,838'],
  ['Barnes', 59, 1157, 740, '1111,683 1197,680 1202,831 1117,835'],
  ['Cass', 406, 1250, 734, '1197,680 1293,675 1297,730 1305,755 1303,825 1202,831'],
  ['Slope', 2, 542, 854, '504,829 603,833 601,920 472,914 474,849 502,851'],
  ['Hettinger', 11, 655, 869, '603,833 702,838 702,925 706,942 650,940 650,922 601,920'],
  ['Bowman', 6, 535, 944, '472,914 592,920 591,1003 470,996'],
  ['Adams', 3, 641, 962, '592,920 650,922 650,940 706,942 707,1009 591,1003'],
  ['Sioux', 12, 839, 953, '835,895 870,898 866,950 878,1013 707,1009 708,978 725,992 740,986 757,994 770,986 788,972 790,962 800,962 821,922'],
  ['Emmons', 10, 912, 911, '862,838 947,838 948,925 952,927 953,1012 878,1013 866,950 873,900 873,850'],
  ['Logan', 3, 997, 866, '947,838 1048,838 1048,924 948,925'],
  ['LaMoure', 8, 1110, 857, '1048,838 1163,833 1166,919 1048,924'],
  ['Ransom', 8, 1208, 860, '1163,833 1247,829 1252,916 1166,919'],
  ['McIntosh', 1, 1009, 950, '952,927 1053,925 1053,1011 953,1012'],
  ['Dickey', 7, 1111, 950, '1053,925 1168,920 1169,1007 1053,1011'],
  ['Sargent', 5, 1211, 944, '1168,920 1252,917 1258,1001 1169,1007'],
  ['Richland', 19, 1290, 905, '1247,829 1305,825 1312,870 1325,900 1328,930 1333,935 1335,997 1258,1001 1252,916']
];
const shade = v => v === 'w' ? '#fff' : v >= 440 ? '#672113' : v > 400 ? '#7d2818' : v > 200 ? '#d1482a' : v > 160 ? '#da6042' : v > 140 ? '#dc6b50' : v > 130 ? '#de7055' : v > 100 ? '#e07b63' : v > 40 ? '#e89c8b' : v > 25 ? '#eaa697' : '#edb2a8';
define('county-map', `svg{display:block;width:100%;height:auto}`, () =>
  sheet(468, 232, 870, 783, 3, d => counties.map(c => d.poly(c[4], shade(c[1]))).join('') +
    counties.filter(c => c[0]).map(([n, v, x, y]) => {
      const rows = n.split('|'), z = /Foster|Towner/.test(n) ? 5 : /Pierce|Eddy|Steele|Golden/.test(n) ? 6 : 7;
      const drop = n === 'Eddy' || n === 'Foster' ? 26 : 36;
      return rows.map((s, i) => d.t(x, y + i * 24, s, { f: '#fff', w: 700, z })).join('') +
        d.t(x, y + (rows.length - 1) * 24 + (rows.length > 1 ? 30 : drop), v, { f: '#fbe9e5', z: 8 });
    }).join('')));

define('power-report', `
  :host{display:flex;flex-direction:column;min-height:2556px;margin:31px 32px 0;font-size:5px}
  .page{padding:0 9px 0 7px}
  .in{padding-left:3px}
  .upd{grid-column:3;font-size:6px;line-height:11px;text-align:center;padding-right:11px;margin-top:-5px}
  .upd b{display:block;font-size:5px}
  .first{--drop:0px;min-height:39px;margin-top:10px}
  .second{--drop:12px;margin-top:8px}
  .third{--drop:4px;min-height:43px;margin-top:6px}
  .fourth{margin-top:8px}
  .fifth{--drop:7px;min-height:36px;margin-top:5px}
  .filters{display:grid;grid-template-columns:1fr 55px 1fr;width:220px;text-align:center;line-height:8px;color:#444}
  .filters>div{padding-top:3px}
  .filters b{display:block;font-weight:400;color:#df7158}
  .filters label{font-size:4px;line-height:8px;color:#777;display:block}
  .filters select{display:block;width:55px;height:10px;margin-top:1px;border:1px solid #e6e6e6;font:4px/8px "Open Sans",sans-serif;color:#444;background:#fff url('data:image/svg+xml,<svg xmlns="http://www.w3.org/2000/svg" viewBox="0 0 6 6"><path d="M1 2l2 2 2-2" fill="none" stroke="%23888" stroke-width=".6"/></svg>') no-repeat right 1px center/6px;appearance:none;padding:0 1px}
  .pop{justify-self:end;margin-right:13px}.tst{justify-self:start;margin-left:11px}
  .status{display:grid;grid-template-columns:81fr 280fr 80fr;gap:4px;margin-top:3px;background:#e2e2e2}
  .col{display:grid;gap:4px;grid-template-rows:17fr 13fr 20fr 20fr 13fr 19fr 20fr 13fr 19fr 19fr}
  .mid{display:grid;gap:4px;grid-template-rows:23px auto auto 1fr}
  .two{display:grid;grid-template-columns:1fr 1fr;gap:3px}
  .slide{${CARD}display:grid;grid-template-columns:23px 23px 1fr;gap:2px;align-content:start;padding:3px 4px 0;min-height:22px}
  .slide input[type=text]{width:23px;height:8px;border:1px solid #eee;padding:0;margin:0;font:4px/6px "Open Sans",sans-serif;color:#333}
  .slide input.off{color:#bbb}
  .slide input[type=range]{grid-column:1/-1;appearance:none;display:block;width:100%;height:6px;margin:0;background:linear-gradient(#000,#000) 3px 50%/calc(100% - 8px) 1px no-repeat}
  .slide input::-webkit-slider-thumb{appearance:none;width:6px;height:6px;border:1px solid #333;border-radius:50%;background:#fff}
  .trends{display:grid;grid-template-columns:160fr 121fr 160fr;gap:5px 4px;margin-top:3px;background:#e2e2e2}
  .stack{display:flex;flex-direction:column;justify-content:space-between;grid-column:2;grid-row:1/3}
  .three{display:grid;grid-template-columns:1fr 1fr 1fr;gap:6px;margin-top:4px}
  .demo{display:grid;grid-template-columns:146fr 146fr 143fr;gap:5px;margin-top:4px}
  .pair{display:grid;grid-template-columns:222fr 221fr;gap:3px;margin-top:4px}
  .hosp{display:grid;grid-template-columns:144fr 155fr 143fr;gap:3px;margin:3px -2px 0 0;background:#e2e2e2}
  .hosp>div{display:flex;flex-direction:column;justify-content:space-between;gap:3px;min-width:0}
  .hosp .wide{grid-column:1/3}
  .r3{display:grid;grid-template-columns:1fr 1fr 1fr;gap:4px}
  .r2{display:grid;grid-template-columns:1fr 1fr;gap:3px}
  .r3 stat-card,.r2 stat-card,stat-card.f{min-height:25px}
  .map{display:grid;grid-template-columns:80fr 294fr;gap:19px;padding:0 37px 0 17px;margin-top:9px}
  .keys{display:grid;gap:7px;align-content:start;padding-top:32px}
  .bar{display:flex;align-items:center;gap:18px;margin-top:auto;height:25px;padding:0 8px;border-top:1px solid #c8c8c8;background:#eaeaea;font-size:9px;font-weight:600;color:#111}
  .bar span{margin-right:auto}
  .bar button{border:0;background:none;padding:0;height:12px}
  .bar svg{display:block}`,
  `<div class="page">
    <big-title>STATE and COUNTY<br>LEVEL INFORMATION<div slot="side" class="upd"><b>LAST UPDATED</b>9/7/2020 8:19:37 AM</div></big-title>
    <report-head class="first">COVID-19 STATUS REPORT
      <div slot="under" class="filters"><div class="pop">POPULATION<b>760,077</b></div><span><label for="county">COUNTY</label><select id="county"><option>All</option></select></span><div class="tst">% of POPULATION TESTED<b>26.90%</b></div></div>
    </report-head>
    <div class="status">
      <div class="col"><head-card size="l">TODAY</head-card><head-card>NEW TESTS</head-card><stat-card label="TOTAL PROCESSED" value="2,404" tone="#d44527"></stat-card><stat-card label="FIRST TIME TESTED" value="986" tone="#d44527"></stat-card><head-card>NEW POSITIVES</head-card><stat-card label="TOTAL" value="171" tone="#f9a11b"></stat-card><stat-card tight label="PREVIOUSLY TESTED NEG BEFORE POS. TEST" value="85" tone="#f9a11b"></stat-card><head-card>POSITIVITY RATE</head-card><stat-card label="TOTAL" value="7.11%" tone="#6f9748"></stat-card><stat-card label="RECOVERED" value="174" tone="#0b7480"></stat-card></div>
      <div class="mid"><stat-card size="l" label="ACTIVE POSITIVES" value="2,565" tone="#df694e"></stat-card><chart-card kind="active"></chart-card><chart-card kind="rolling"></chart-card>
        <div class="slide"><input type="text" class="off" value="3/15/2020" aria-label="From"><input type="text" value="9/6/2020" aria-label="To"><input type="range" value="100" aria-label="Date range"></div></div>
      <div class="col"><head-card size="l">CUMULATIVE</head-card><head-card>TESTS</head-card><stat-card label="TOTAL PROCESSED" value="507,302" tone="#d44527"></stat-card><stat-card label="UNIQUE INDIVIDUALS" value="211,898" tone="#d44527"></stat-card><head-card>POSITIVES</head-card><stat-card label="TOTAL" value="13,801" tone="#f9a11b"></stat-card><stat-card tight label="PREVIOUSLY TESTED NEG BEFORE POS. TEST" value="4,476" tone="#f9a11b"></stat-card><head-card>POSITIVITY RATE</head-card><stat-card label="TOTAL" value="6.51%" tone="#6f9748"></stat-card><div class="two"><stat-card label="RECOVERED" value="11,080" tone="#0b7480"></stat-card><stat-card label="DEATHS" value="156" tone="#222"></stat-card></div></div>
    </div>

    <report-head class="second">COVID-19 TRENDS</report-head>
    <div class="trends">
      <chart-card kind="newpos"></chart-card>
      <div class="stack"><chart-card kind="ages"></chart-card><div class="r2"><press-button tone="orange">PRESS FOR ACTIVES</press-button><press-button>PRESS FOR POSITIVES</press-button></div></div>
      <chart-card kind="cumulative"></chart-card><chart-card kind="tests"></chart-card><chart-card kind="totals"></chart-card>
    </div>
    <div class="three"><chart-card kind="previously"></chart-card><chart-card kind="per10k"></chart-card><chart-card kind="per100k"></chart-card></div>

    <big-title style="margin-top:23px">STATE LEVEL<br>INFORMATION</big-title>
    <div class="in">
      <report-head class="third">COVID-19 DEMOGRAPHICS and<br>SOURCE of EXPOSURE</report-head>
      <div class="demo"><chart-card kind="gender"></chart-card><chart-card kind="spread"></chart-card><chart-card kind="race"></chart-card></div>
      <div class="pair"><press-button tone="green">PRESS FOR ACTIVE POSITIVES</press-button><press-button>PRESS FOR CUMULATIVE POSITIVES</press-button></div>

      <report-head class="fourth">STATE HOSPITALIZATIONS<br>and DEATHS</report-head>
      <div class="hosp">
        <head-card class="wide" size="m">HOSPITALIZATIONS</head-card><head-card size="m">DEATHS</head-card>
        <div><chart-card kind="hosp"></chart-card><chart-card kind="hospage"></chart-card></div>
        <div>
          <div class="r3"><stat-card size="m" label="COVID ACTIVE<br>NON-ICU" value="49" tone="#bd5a62"></stat-card><stat-card size="m" label="COVID ACTIVE<br>HOSPITALIZATIONS" value="68" tone="#333"></stat-card><stat-card size="m" label="COVID ACTIVE ICU" value="19" tone="#35909a"></stat-card></div>
          <div class="r3"><stat-card size="m" label="COVID TOTAL<br>NON-ICU" value="440" tone="#bd5a62"></stat-card><stat-card size="m" label="COVID TOTAL<br>HOSPITALIZATIONS" value="602" tone="#333"></stat-card><stat-card size="m" label="COVID TOTAL ICU" value="162" tone="#35909a"></stat-card></div>
          <div class="r2"><chart-card kind="bedsA"></chart-card><chart-card kind="bedsB"></chart-card></div>
          <div class="r2"><stat-card tight size="m" label="NON-ICU BEDS OCCUPIED DUE TO COVID" value="2.83%" tone="#a6343b"></stat-card><stat-card size="m" label="ICU BEDS OCCUPIED DUE TO<br>COVID" value="6.53%" tone="#0b7480"></stat-card></div>
          <stat-card class="f" size="m" label="AVERAGE HOSPITALIZATION LENGTH OF STAY (DAYS)" value="8.22" tone="#f9a11b"></stat-card>
        </div>
        <div><stat-card class="f" size="m" label="CUMULATIVE DEATHS" value="156" tone="#d44527"></stat-card><chart-card kind="deathage"></chart-card><chart-card kind="deathmonth"></chart-card></div>
      </div>

      <report-head class="fifth">NORTH DAKOTA COUNTY<br>ANALYSIS</report-head>
      <div class="map">
        <div class="keys"><press-button small tone="red">PRESS FOR ACTIVE POSITIVES</press-button><press-button small>PRESS FOR DAILY POSITIVES</press-button><press-button small>PRESS FOR CUMULATIVE POSITIVES</press-button><press-button small>PRESS FOR CUMULATIVE DEATHS</press-button><press-button small>PRESS FOR ACTIVE PER 10K</press-button></div>
        <county-map></county-map>
      </div>
    </div>
  </div>
  <div class="bar"><span>Microsoft Power BI</span>
    <button type="button" aria-label="Share"><svg width="11" height="11" viewBox="0 0 11 11" fill="none" stroke="#111" stroke-width=".9"><path d="M2.500 3.500H1v7h7.500V8M3 7.500q0-4.500 4-4.500V1l3.500 3L7 7V5Q4.500 5 3 7.500Z"/></svg></button>
    <button type="button" aria-label="Full screen"><svg width="10" height="11" viewBox="0 0 10 11" fill="none" stroke="#111" stroke-width=".9"><path d="M.500 10.500L9.500.500M6 .500h3.500V4M.500 7v3.500H4"/></svg></button></div>`);

/* ---------- tables ---------- */
define('serology-block', `
  :host{padding:30px 14px 0 32px}
  h3{font-size:13px;line-height:16px;margin:0;color:#0d1a33}
  p{font:italic 9px/18px "Liberation Sans",Arial,sans-serif;margin:6px 0 6px}
  table{width:338px;border-collapse:collapse;border:1px solid #222}
  td,th{border:1px solid #777;padding:0;line-height:16px;font-weight:400;text-align:left}
  th:nth-child(1){width:111px}th:nth-child(2){width:163px}`,
  `<h3>Serology Testing</h3>
  <p>Reported serology tests are completed in a laboratory and do not include point of care serology tests. Individuals<br>who complete an antibody and a PCR test maybe be counted in totals for both.</p>
  <table><tr><th>Detected</th><th>Not Detected</th><th>Total</th></tr><tr><td>359</td><td>8554</td><td>8913</td></tr></table>`);

define('deaths-block', `
  :host{padding:48px 32px 0 22px}
  h2{font-size:18px;line-height:24px;font-weight:400;margin:0 0 4px;color:#0d1a33}
  table{width:calc(100% - 10px);margin-left:10px;border-collapse:collapse}
  th,td{border:1px solid #ddd;padding:5px 0 5px 6px;line-height:15px;text-align:left;vertical-align:top;white-space:nowrap}
  th{border-bottom-width:2px}
  th:last-child{width:40px}
  tr>:last-child{padding-left:5px}
  b,th{color:#0d1a33}
  .gap td{height:26px}`,
  `<h2>Deaths</h2>
  <table><thead><tr><th>Cause</th><th>Cases</th></tr></thead><tbody>
  <tr><td><b>Deaths Due to COVID-19</b><br><em>Official number of individuals who died from COVID-19 as stated on the official death<br>record. There will be a delay - by state law, a death record must be filed within 10 days<br>of the date of death.</em></td><td>121</td></tr>
  <tr><td><b>Deaths Where COVID-19 is Not the Primary Cause</b><br><em>Deaths that list something other than COVID-19 as the official cause of death.</em></td><td>26</td></tr>
  <tr><td><b>Pending Death Records</b><br><em>The number of deaths where an official death record has not been filed. Per state law,<br>this can take up to 10 days from the date of death.</em></td><td>9</td></tr>
  <tr><td><b>Total</b> number of individuals who tested positive and died from any cause while<br>infected with COVID-19.</td><td>156</td></tr>
  <tr class="gap"><td></td><td></td></tr>
  <tr><td><b>Deaths of Individuals Presumed Positive</b><br>Deaths of individuals where COVID-19 was listed as the cause of death on the<br>official death record, but there was not a positive test result. These individuals<br>are presumed positive by the health care provider based on symptoms and/or<br>exposure.</td><td>4</td></tr>
  </tbody></table>`);

define('fold-panel', `
  :host{margin:0 32px 20px}
  button{display:flex;align-items:center;justify-content:space-between;width:100%;height:45px;padding:0 17px;border:1px solid #ddd;border-bottom-width:2px;border-radius:3px;background:#f5f5f5;font:600 11px/16px "Open Sans",sans-serif;color:#333;text-align:left;white-space:nowrap}
  svg{flex:none}`,
  `<button type="button" aria-expanded="false"><span><slot></slot></span><svg width="10" height="10" viewBox="0 0 10 10" stroke="#1578ae" stroke-width="2"><path d="M5 0V10M0 5H10"/></svg></button>`);

define('site-footer', `
  :host{display:grid;grid-template-columns:170px 1fr 149px;background:#786e65;color:#fff;font-size:8px;line-height:16px;height:191px;padding:24px 22px 0 24px;margin-bottom:18px}
  a{color:#fff}
  address{font-style:normal;width:136px}
  .home{display:block;margin-top:30px}
  nav a{text-decoration:none}
  nav span{white-space:nowrap}
  nav .s::before{content:"|";padding:0 6px 0 1px}
  nav .m::before{padding-left:10px}
  nd-logo{width:131px;margin-left:18px}
  .social{display:flex;gap:9px;align-items:center;margin-top:10px}
  .social a{display:block;height:16px}
  svg{display:block}`,
  `<address>Copyright © 2019 <a href="#">North Dakota</a><br><a href="#">Department of Health</a><br>600 East Boulevard Ave Bismarck,<br>ND 58505-0200<br>Phone: 701-328-2372<br><a href="#">Contact Us</a><a class="home" href="#">Intranet</a></address>
  <nav><span><a href="#">Accessibility</a></span><span class="s m"><a href="#">Contact</a></span><br><span class="s"><a href="#">Disclaimer</a></span><span class="s m"><a href="#">Privacy Policy</a></span><br><span class="s"><a href="#">Security Policy</a></span></nav>
  <div><nd-logo tone="light"></nd-logo>
  <div class="social">
    <a href="#" aria-label="Email"><svg width="18" height="16" viewBox="0 0 18 16"><rect y="1" width="18" height="14" rx="2" fill="#fff"/><path d="M0 4.500L7.500 10.500q1.500 1 3 0L18 4.500" fill="none" stroke="#786e65" stroke-width="1"/></svg></a>
    <a href="#" aria-label="Facebook"><svg width="15" height="16" viewBox="0 0 15 16"><rect width="15" height="16" rx="2" fill="#fff"/><path d="M8.500 16V9.800H6.300V7.400H8.500V5.600Q8.500 2.800 11.200 2.800H13V5H11.700Q11 5 11 5.900V7.400H13L12.700 9.800H11V16Z" fill="#786e65"/></svg></a>
    <a href="#" aria-label="Twitter"><svg width="15" height="16" viewBox="0 0 15 16"><rect width="15" height="16" rx="2" fill="#fff"/><path d="M12.500 5Q12 5.300 11.400 5.400 12 5 12.300 4.300L10.900 4.800A2.200 2.200 0 0 0 7.200 6.800Q4.400 6.700 2.700 4.500 1.900 6.200 3.400 7.500L2.400 7.200Q2.400 8.800 4.200 9.400L3.200 9.500Q3.600 10.700 5.200 11 3.900 12 2 11.900 4 13 6 12.900 11.400 12.300 11.400 6.400 12.100 5.900 12.500 5Z" fill="#786e65"/></svg></a>
    <a href="#" aria-label="YouTube"><svg width="15" height="16" viewBox="0 0 15 16"><rect width="15" height="16" rx="2" fill="#fff"/><rect x="1.500" y="3.500" width="12" height="9" rx="2" fill="#786e65"/><path d="M6.200 6V10L9.600 8Z" fill="#fff"/></svg></a>
  </div></div>`);

define('feedback-tab', `
  :host{position:fixed;left:7px;bottom:0;z-index:2}
  button{display:block;width:86px;height:25px;border:0;border-radius:5px 5px 0 0;background:#d44527;color:#fff;font:700 10px/14px "Open Sans",sans-serif;padding:0 0 2px}`,
  `<button type="button">Feedback (+)</button>`);

define('covid-page', `.folds{display:flow-root;padding:34px 0 2px}`,
  `<header><state-banner></state-banner><site-header></site-header><main-nav></main-nav></header>
  <main><bread-crumbs></bread-crumbs><page-title>Coronavirus Cases</page-title><intro-text></intro-text>
  <power-report></power-report>
  <serology-block></serology-block>
  <deaths-block></deaths-block>
  <section class="folds"><fold-panel>By County - Total Tests Completed &amp; Positive Cases</fold-panel><fold-panel>By City &amp; County – Long Term Care Cases &amp; Deaths</fold-panel><fold-panel>By County - Total Unique Tests, Positives, Negatives, Recovered, and Deaths</fold-panel><fold-panel>By County - Source of Exposure</fold-panel><fold-panel>By County - Rate per 100,000</fold-panel></section></main>
  <site-footer></site-footer><feedback-tab></feedback-tab>`);
</script>
</body>
</html>
